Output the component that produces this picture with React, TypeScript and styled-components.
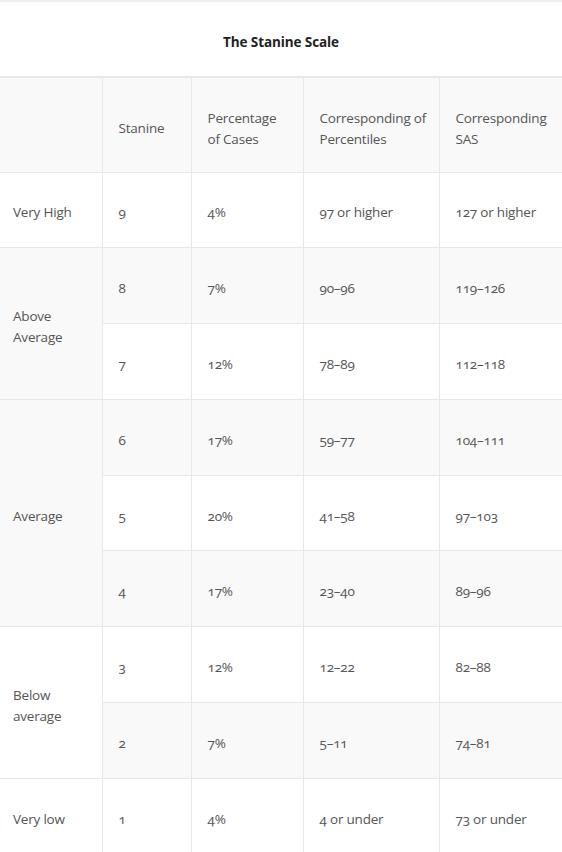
import React from "react";
import styled, { createGlobalStyle } from "styled-components";

const Global = createGlobalStyle`
  html, body { margin: 0; padding: 0; background: #fff; }
  body { font-family: "Open Sans", "Liberation Sans", sans-serif; }
`;

const Page = styled.div`
  border-top: 2px solid #efefef;
  width: 562px;
  overflow: hidden;
`;

const Title = styled.div`
  height: 74px;
  display: flex;
  align-items: center;
  justify-content: center;
  font-size: 13.5px;
  font-weight: 700;
  letter-spacing: -0.1px;
  color: #222;
  padding-top: 6px;
  box-sizing: border-box;
`;

const Table = styled.table`
  width: 562px;
  table-layout: fixed;
  border-collapse: collapse;
  font-size: 13.5px;
  letter-spacing: -0.2px;
  line-height: 21px;
  color: #555;
  font-variant-numeric: oldstyle-nums;
  font-feature-settings: "onum" 1;
`;

const Col = styled.col<{ $w: number }>`
  width: ${(p) => p.$w}px;
`;

const Row = styled.tr<{ $shade?: boolean }>`
  background: ${(p) => (p.$shade ? "#f9f9f9" : "#ffffff")};
`;

const HeadCell = styled.th`
  font-weight: 400;
  text-align: left;
  vertical-align: middle;
  height: 95px;
  padding: 8px 0 0 16px;
  white-space: nowrap;
  border: 1px solid #e8e8e8;
  border-top: 2px solid #e8e8e8;
  box-sizing: border-box;
  &:first-child { border-left: none; padding-left: 13px; }
  &:last-child { border-right: none; }
`;

const Cell = styled.td<{ $first?: boolean }>`
  vertical-align: middle;
  height: 75.8px;
  padding: 6px 16px 0;
  border: 1px solid #e8e8e8;
  box-sizing: border-box;
  &:last-child { border-right: none; }
  ${(p) => (p.$first ? "border-left: none; padding-left: 13px;" : "")}
`;

type Group = { label: string; rows: [string, string, string, string][] };

const groups: Group[] = [
  { label: "Very High", rows: [["9", "4%", "97 or higher", "127 or higher"]] },
  {
    label: "Above Average",
    rows: [
      ["8", "7%", "90–96", "119–126"],
      ["7", "12%", "78–89", "112–118"],
    ],
  },
  {
    label: "Average",
    rows: [
      ["6", "17%", "59–77", "104–111"],
      ["5", "20%", "41–58", "97–103"],
      ["4", "17%", "23–40", "89–96"],
    ],
  },
  {
    label: "Below average",
    rows: [
      ["3", "12%", "12–22", "82–88"],
      ["2", "7%", "5–11", "74–81"],
    ],
  },
  { label: "Very low", rows: [["1", "4%", "4 or under", "73 or under"]] },
];

const widths = [102, 89, 112, 136, 123];

const headers: string[][] = [
  [],
  ["Stanine"],
  ["Percentage", "of Cases"],
  ["Corresponding of", "Percentiles"],
  ["Corresponding", "SAS"],
];

export default function App() {
  let idx = 0;
  return (
    <Page>
      <Global />
      <Title>The Stanine Scale</Title>
      <Table>
        <colgroup>
          {widths.map((w, k) => (
            <Col key={k} $w={w} />
          ))}
        </colgroup>
        <thead>
          <Row $shade>
            {headers.map((lines, k) => (
              <HeadCell key={k}>
                {lines.map((l, n) => (
                  <React.Fragment key={n}>
                    {n > 0 && <br />}
                    {l}
                  </React.Fragment>
                ))}
              </HeadCell>
            ))}
          </Row>
        </thead>
        <tbody>
          {groups.map((g) =>
            g.rows.map((r, i) => {
              idx += 1;
              return (
                <Row key={r[0]} $shade={idx % 2 === 0}>
                  {i === 0 && (
                    <Cell $first rowSpan={g.rows.length}>
                      {g.label}
                    </Cell>
                  )}
                  {r.map((v, j) => (
                    <Cell key={j}>{v}</Cell>
                  ))}
                </Row>
              );
            })
          )}
        </tbody>
      </Table>
    </Page>
  );
}
